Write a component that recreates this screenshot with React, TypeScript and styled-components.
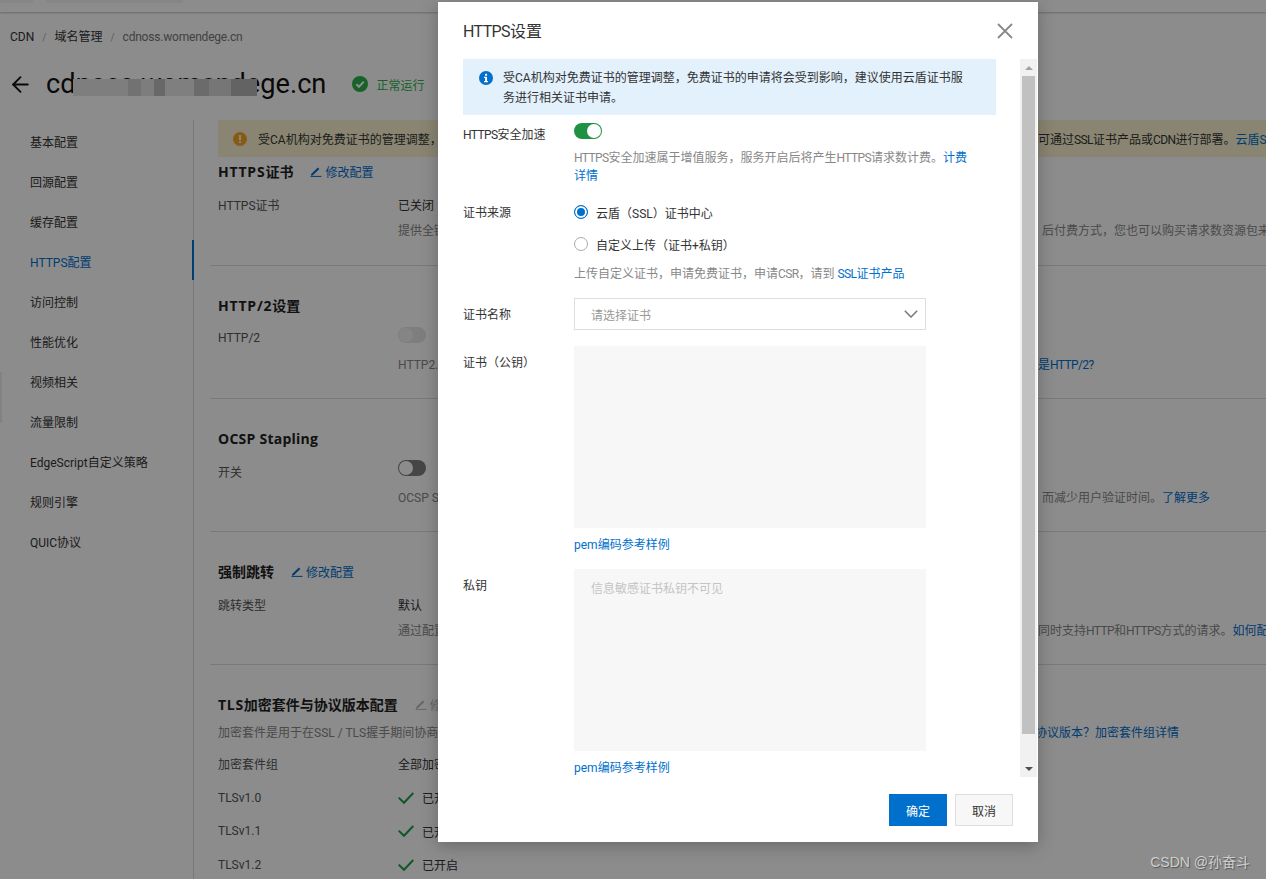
import React from "react";
import styled, { createGlobalStyle } from "styled-components";
import { ArrowLeft } from "lucide-react";

const GlobalStyle = createGlobalStyle`
  html, body {
    margin: 0;
    height: 100%;
    background: #fff;
  }
  body {
    font-family: Roboto, "Noto Sans CJK SC", "Liberation Sans", sans-serif;
    font-size: 12px;
    color: #333;
    overflow: hidden;
  }
  * {
    box-sizing: border-box;
  }
`;

const Page = styled.div`
  position: relative;
  width: 1266px;
  height: 879px;
  overflow: hidden;
  background: #fff;
`;

const TopBar = styled.div`
  display: flex;
  gap: 13px;
  height: 12px;
  background: #fff;
  box-shadow: 0 1px 2px rgba(0, 0, 0, 0.25);
`;

const TopTab = styled.span<{ $width: number }>`
  width: ${(p) => p.$width}px;
  height: 3px;
  background: #f4f4f4;
`;

const Breadcrumb = styled.nav`
  display: flex;
  align-items: center;
  gap: 8px;
  height: 48px;
  padding: 2px 0 0 10px;
`;

const Crumb = styled.span<{ $muted?: boolean }>`
  line-height: 20px;
  color: ${(p) => (p.$muted ? "#777" : "#333")};
  letter-spacing: ${(p) => (p.$muted ? "-0.2px" : 0)};
`;

const CrumbSlash = styled.span`
  color: #aaa;
  font-size: 10px;
`;

const TitleRow = styled.div`
  display: flex;
  align-items: center;
  height: 48px;
  margin-bottom: 12px;
  padding-left: 8px;
  color: #111;
`;

const PageTitle = styled.h1`
  position: relative;
  margin: 0 26px 0 13px;
  font-size: 27.2px;
  font-weight: 400;
  line-height: 48px;
  color: #111;
`;

const Mosaic = styled.span`
  position: absolute;
  left: 27px;
  top: 19px;
  width: 184px;
  height: 17px;
  filter: blur(0.6px);
  background: linear-gradient(
    90deg,
    #e6e6e6 0 30%,
    #cfcfcf 30% 37%,
    #e4e4e4 37% 44%,
    #bdbdbd 44% 50%,
    #e8e8e8 50% 66%,
    #c4c4c4 66% 74%,
    #d8d8d8 74% 86%,
    #b4b4b4 86% 100%
  );
`;

const Status = styled.span`
  display: flex;
  align-items: center;
  gap: 8px;
  color: #2bb24c;
`;

const Main = styled.div`
  display: flex;
  height: 759px;
`;

const Sidebar = styled.ul`
  flex: none;
  width: 194px;
  margin: 0;
  padding: 0;
  list-style: none;
  border-right: 1px solid #ddd;
`;

const NavItem = styled.li<{ $active?: boolean }>`
  height: 40px;
  padding: 3px 0 0 30px;
  margin-right: -1px;
  line-height: 40px;
  color: ${(p) => (p.$active ? "#0070cc" : "#333")};
  border-right: 2px solid ${(p) => (p.$active ? "#0070cc" : "transparent")};
`;

const Content = styled.div`
  flex: 1;
  min-width: 0;
  padding-left: 16px;
  overflow: hidden;
`;

const Notice = styled.div`
  display: flex;
  align-items: center;
  gap: 11px;
  height: 37px;
  margin-left: 8px;
  padding-left: 15px;
  white-space: nowrap;
  background: #fbf3cf;
  color: #333;
`;

const Section = styled.section<{ $first?: boolean }>`
  height: ${(p) => (p.$first ? 109 : 133)}px;
  padding: ${(p) => (p.$first ? 4 : 29)}px 0 0 8px;
  border-bottom: 1px solid #ddd;
  white-space: nowrap;
`;

const OpenSection = styled(Section)`
  height: auto;
  border-bottom: none;
`;

const SectionHead = styled.div`
  display: flex;
  align-items: center;
  gap: 17px;
  height: 20px;
  margin-bottom: 13px;
`;

const SectionTitle = styled.h3`
  margin: 0;
  font-family: "Open Sans", "Noto Sans CJK SC", sans-serif;
  font-size: 14px;
  font-weight: 700;
  color: #222;
`;

const TitleLatin = styled.span<{ $spread: number }>`
  letter-spacing: ${(p) => p.$spread}px;
`;

const EditLink = styled.a<{ $disabled?: boolean }>`
  display: flex;
  align-items: center;
  gap: 3px;
  color: ${(p) => (p.$disabled ? "#bbb" : "#0070cc")};
`;

const Row = styled.div`
  display: flex;
  align-items: center;
  height: 20px;
`;

const TlsRow = styled(Row)`
  height: 33.7px;
`;

const RowLabel = styled.span`
  width: 180px;
  flex: none;
  color: #555;
`;

const RowValue = styled.span`
  display: flex;
  align-items: center;
  gap: 8px;
  color: #333;
`;

const Description = styled.p<{ $indent?: boolean }>`
  display: flex;
  margin: 7px 0 0 ${(p) => (p.$indent ? 180 : 0)}px;
  line-height: 20px;
  color: #888;
`;

const TlsDescription = styled(Description)`
  margin: -4px 0 4px;
`;

/* the part of a long sentence that sits behind the dialog */
const Hidden = styled.span<{ $width: number }>`
  flex: none;
  width: ${(p) => p.$width}px;
  overflow: hidden;
`;

/* Latin runs are a little narrower in the reference than in Roboto */
const Latin = styled.span`
  letter-spacing: -0.6px;
`;

const Tail = styled.span`
  flex: none;
`;

const Link = styled.a`
  color: #0070cc;
`;

const PageSwitch = styled.span<{ $disabled?: boolean }>`
  position: relative;
  display: block;
  width: 28px;
  height: 16px;
  border-radius: 8px;
  margin-top: -6px;
  background: ${(p) => (p.$disabled ? "#e6e6e6" : "#808080")};
  &::after {
    content: "";
    position: absolute;
    left: 1px;
    top: 1px;
    width: 14px;
    height: 14px;
    border-radius: 50%;
    background: ${(p) => (p.$disabled ? "#f3f3f3" : "#fff")};
  }
`;

const SideHandle = styled.span`
  position: absolute;
  left: 0;
  top: 372px;
  width: 2px;
  height: 51px;
  background: #ededed;
`;

const Overlay = styled.div`
  position: absolute;
  inset: 0;
  background: rgba(0, 0, 0, 0.45);
`;

const Dialog = styled.div`
  position: absolute;
  left: 438px;
  top: 2px;
  display: flex;
  flex-direction: column;
  width: 600px;
  height: 840px;
  background: #fff;
  box-shadow: 0 4px 16px rgba(0, 0, 0, 0.25);
`;

const DialogHeader = styled.header`
  display: flex;
  align-items: center;
  justify-content: space-between;
  flex: none;
  height: 57px;
  padding: 0 25px 2px;
`;

const DialogTitle = styled.h2`
  margin: 0;
  font-size: 16px;
  font-weight: 400;
  color: #333;
`;

const CloseButton = styled.button`
  display: flex;
  margin-top: 3px;
  padding: 0;
  border: none;
  background: none;
  color: #888;
`;

const DialogBody = styled.div`
  display: flex;
  justify-content: space-between;
  flex: none;
  height: 718px;
  padding: 0 1px 0 25px;
  overflow: hidden;
`;

const FormArea = styled.div`
  width: 533px;
`;

const InfoBox = styled.div`
  display: flex;
  gap: 10px;
  margin-bottom: 8px;
  padding: 9px 24px 7px 16px;
  line-height: 20px;
  color: #333;
  background: #e3f1fd;
`;

const InfoIcon = styled.span`
  flex: none;
  display: flex;
  height: 20px;
  align-items: center;
`;

const FormRow = styled.div`
  display: grid;
  grid-template-columns: 111px 1fr;
  margin-bottom: 16px;
`;

/* fixed height: the control beside the label sets the height of the row */
const FormLabel = styled.label<{ $line: number }>`
  height: 20px;
  line-height: ${(p) => p.$line}px;
  color: #333;
`;

const FormSwitch = styled.span`
  position: relative;
  display: block;
  width: 28px;
  height: 16px;
  border-radius: 8px;
  background: #1f9242;
  &::after {
    content: "";
    position: absolute;
    right: 1px;
    top: 1px;
    width: 14px;
    height: 14px;
    border-radius: 50%;
    background: #fff;
  }
`;

const Help = styled.p<{ $gap: number }>`
  max-width: 400px;
  margin: ${(p) => p.$gap}px 0 -1px;
  line-height: 18px;
  color: #888;
`;

const RadioGroup = styled.div`
  display: flex;
  flex-direction: column;
  gap: 6px;
  margin-top: -1px;
`;

const RadioRow = styled.div`
  display: flex;
  align-items: center;
  gap: 8px;
  height: 26px;
  color: #333;
`;

const RadioDot = styled.span<{ $checked?: boolean }>`
  width: 14px;
  height: 14px;
  border-radius: 50%;
  border: ${(p) => (p.$checked ? "1px solid #0070cc" : "1px solid #aaa")};
  background: ${(p) => (p.$checked ? "#0070cc" : "#fff")};
  box-shadow: ${(p) => (p.$checked ? "inset 0 0 0 2px #fff" : "none")};
`;

const SelectBox = styled.div`
  display: flex;
  align-items: center;
  justify-content: space-between;
  width: 352px;
  height: 32px;
  padding: 0 7px 0 16px;
  border: 1px solid #dedede;
  color: #999;
`;

const PemArea = styled.textarea`
  display: block;
  width: 352px;
  height: 182px;
  padding: 11px 17px;
  border: none;
  outline: none;
  resize: none;
  background: #f7f7f7;
  font: inherit;
  line-height: 18px;
  &::placeholder {
    color: #c4c4c4;
    opacity: 1;
  }
`;

const PemLink = styled.a`
  display: block;
  margin: 8px 0 -1px;
  line-height: 18px;
  color: #0070cc;
`;

const ScrollTrack = styled.div`
  display: flex;
  flex-direction: column;
  flex: none;
  width: 17px;
  height: 100%;
  background: #f1f1f1;
`;

const ScrollArrow = styled.span<{ $down?: boolean }>`
  display: flex;
  align-items: center;
  justify-content: center;
  flex: none;
  height: 17px;
  margin-top: ${(p) => (p.$down ? "auto" : 0)};
  &::before {
    content: "";
    border-left: 4px solid transparent;
    border-right: 4px solid transparent;
    ${(p) =>
      p.$down
        ? "border-top: 4px solid #505050;"
        : "border-bottom: 4px solid #a3a3a3;"}
  }
`;

const ScrollThumb = styled.span`
  flex: none;
  height: 658px;
  margin: 0 2px;
  background: #c1c1c1;
`;

const DialogFooter = styled.footer`
  display: flex;
  justify-content: flex-end;
  gap: 8px;
  padding: 17px 25px 0 0;
`;

const Button = styled.button<{ $primary?: boolean }>`
  width: 58px;
  height: 32px;
  padding: 0;
  font: inherit;
  color: ${(p) => (p.$primary ? "#fff" : "#333")};
  background: ${(p) => (p.$primary ? "#0070cc" : "#f7f7f7")};
  border: ${(p) => (p.$primary ? "none" : "1px solid #dedede")};
`;

const Watermark = styled.span`
  position: absolute;
  right: 16px;
  bottom: 8px;
  font-family: "Liberation Sans", "Noto Sans CJK SC", sans-serif;
  font-size: 14px;
  color: #d0d0d0;
  text-shadow: 1px 1px 1px rgba(0, 0, 0, 0.4);
`;

const MarkSvg = styled.svg`
  flex: none;
  display: block;
`;

const navItems = [
  "基本配置",
  "回源配置",
  "缓存配置",
  "HTTPS配置",
  "访问控制",
  "性能优化",
  "视频相关",
  "流量限制",
  "EdgeScript自定义策略",
  "规则引擎",
  "QUIC协议",
];

const tlsVersions = ["TLSv1.0", "TLSv1.1", "TLSv1.2"];

function PenIcon() {
  return (
    <MarkSvg width="12" height="12" viewBox="0 0 12 12" fill="none">
      <path d="M1 9.2 7.8 2.4 9.4 4 2.6 10.4H1Z" fill="currentColor" />
      <path d="M0.5 11.4H11.5" stroke="currentColor" strokeWidth="1" />
    </MarkSvg>
  );
}

function CloseIcon() {
  return (
    <MarkSvg width="16" height="16" viewBox="0 0 16 16" fill="none">
      <path d="M1 1 15 15M15 1 1 15" stroke="currentColor" strokeWidth="1.8" />
    </MarkSvg>
  );
}

function CaretIcon() {
  return (
    <MarkSvg width="14" height="8" viewBox="0 0 14 8" fill="none">
      <path d="M0.8 0.8 7 7 13.2 0.8" stroke="#777" strokeWidth="1.5" />
    </MarkSvg>
  );
}

function TickIcon() {
  return (
    <MarkSvg width="16" height="12" viewBox="0 0 16 12" fill="none">
      <path d="M0.7 5.6 6 10.8 15.3 1" stroke="#1e9e47" strokeWidth="2" />
    </MarkSvg>
  );
}

function CircleMark({ size, color, mark }: { size: number; color: string; mark: "check" | "warn" | "info" }) {
  return (
    <MarkSvg width={size} height={size} viewBox="0 0 16 16">
      <circle cx="8" cy="8" r="8" fill={color} />
      {mark === "check" && (
        <path d="M4.3 8.2 7 10.8 11.8 5.6" fill="none" stroke="#fff" strokeWidth="2" />
      )}
      {mark === "warn" && (
        <>
          <rect x="7" y="3.4" width="2" height="6" fill="#fff" />
          <rect x="7" y="10.6" width="2" height="2" fill="#fff" />
        </>
      )}
      {mark === "info" && (
        <>
          <rect x="7" y="3.2" width="2.2" height="2.2" fill="#fff" />
          <path d="M5.8 6.6H9.2V11.4H10.2V12.8H5.8V11.4H7V8H5.8Z" fill="#fff" />
        </>
      )}
    </MarkSvg>
  );
}

export default function App() {
  return (
    <Page>
      <GlobalStyle />
      <TopBar>
        <TopTab $width={33} />
        <TopTab $width={137} />
      </TopBar>
      <Breadcrumb>
        <Crumb>CDN</Crumb>
        <CrumbSlash>/</CrumbSlash>
        <Crumb>域名管理</Crumb>
        <CrumbSlash>/</CrumbSlash>
        <Crumb $muted>cdnoss.womendege.cn</Crumb>
      </Breadcrumb>
      <TitleRow>
        <ArrowLeft size={25} strokeWidth={1.8} />
        <PageTitle>
          cdnoss.womendege.cn
          <Mosaic />
        </PageTitle>
        <Status>
          <CircleMark size={16} color="#2bb24c" mark="check" />
          正常运行
        </Status>
      </TitleRow>
      <Main>
        <Sidebar>
          {navItems.map((item) => (
            <NavItem key={item} $active={item === "HTTPS配置"}>
              {item}
            </NavItem>
          ))}
        </Sidebar>
        <Content>
          <Notice>
            <CircleMark size={14} color="#f5a623" mark="warn" />
            <Hidden $width={769}>
              受CA机构对免费证书的管理调整，免费证书的申请将会受到影响，建议使用云盾证书服务进行相关证书申请，
            </Hidden>
            <Tail>
              可通过<Latin>SSL</Latin>证书产品或<Latin>CDN</Latin>进行部署。<Link>云盾SSL证书</Link>
            </Tail>
          </Notice>
          <Section $first>
            <SectionHead>
              <SectionTitle>
                <TitleLatin $spread={0.8}>HTTPS</TitleLatin>证书
              </SectionTitle>
              <EditLink>
                <PenIcon />
                修改配置
              </EditLink>
            </SectionHead>
            <Row>
              <RowLabel>HTTPS证书</RowLabel>
              <RowValue>已关闭</RowValue>
            </Row>
            <Description $indent>
              <Hidden $width={644}>提供全链路HTTPS安全加速方案，HTTPS安全加速属于增值服务</Hidden>
              <Tail>后付费方式，您也可以购买请求数资源包来抵扣</Tail>
            </Description>
          </Section>
          <Section>
            <SectionHead>
              <SectionTitle>
                <TitleLatin $spread={0.8}>HTTP/2</TitleLatin>设置
              </SectionTitle>
            </SectionHead>
            <Row>
              <RowLabel>HTTP/2</RowLabel>
              <PageSwitch $disabled />
            </Row>
            <Description $indent>
              <Hidden $width={640}>HTTP2.0是最新的HTTP协议，开启前请先配置HTTPS证书</Hidden>
              <Link>
                是<Latin>HTTP/2?</Latin>
              </Link>
            </Description>
          </Section>
          <Section>
            <SectionHead>
              <SectionTitle>
                <TitleLatin $spread={0.25}>OCSP Stapling</TitleLatin>
              </SectionTitle>
            </SectionHead>
            <Row>
              <RowLabel>开关</RowLabel>
              <PageSwitch />
            </Row>
            <Description $indent>
              <Hidden $width={644}>OCSP Stapling功能开启后，由CDN节点查询证书状态信息</Hidden>
              <Tail>
                而减少用户验证时间。<Link>了解更多</Link>
              </Tail>
            </Description>
          </Section>
          <Section>
            <SectionHead>
              <SectionTitle>强制跳转</SectionTitle>
              <EditLink>
                <PenIcon />
                修改配置
              </EditLink>
            </SectionHead>
            <Row>
              <RowLabel>跳转类型</RowLabel>
              <RowValue>默认</RowValue>
            </Row>
            <Description $indent>
              <Hidden $width={640}>通过配置强制跳转，可以将客户端到边缘节点的原请求方式强制跳转</Hidden>
              <Tail>
                同时支持<Latin>HTTP</Latin>和<Latin>HTTPS</Latin>方式的请求。<Link>如何配置</Link>
              </Tail>
            </Description>
          </Section>
          <OpenSection>
            <SectionHead>
              <SectionTitle>
                <TitleLatin $spread={0.7}>TLS</TitleLatin>加密套件与协议版本配置
              </SectionTitle>
              <EditLink $disabled>
                <PenIcon />
                修改配置
              </EditLink>
            </SectionHead>
            <TlsDescription>
              <Hidden $width={817}>加密套件是用于在SSL / TLS握手期间协商安全设置的算法的组合</Hidden>
              <Link>协议版本？加密套件组详情</Link>
            </TlsDescription>
            <TlsRow>
              <RowLabel>加密套件组</RowLabel>
              <RowValue>全部加密套件</RowValue>
            </TlsRow>
            {tlsVersions.map((version) => (
              <TlsRow key={version}>
                <RowLabel>{version}</RowLabel>
                <RowValue>
                  <TickIcon />
                  已开启
                </RowValue>
              </TlsRow>
            ))}
          </OpenSection>
        </Content>
      </Main>
      <SideHandle />
      <Overlay />
      <Dialog>
        <DialogHeader>
          <DialogTitle>
            <Latin>HTTPS</Latin>设置
          </DialogTitle>
          <CloseButton>
            <CloseIcon />
          </CloseButton>
        </DialogHeader>
        <DialogBody>
          <FormArea>
            <InfoBox>
              <InfoIcon>
                <CircleMark size={14} color="#0070cc" mark="info" />
              </InfoIcon>
              <span>
                受CA机构对免费证书的管理调整，免费证书的申请将会受到影响，建议使用云盾证书服务进行相关证书申请。
              </span>
            </InfoBox>
            <FormRow>
              <FormLabel $line={24}>
                <Latin>HTTPS</Latin>安全加速
              </FormLabel>
              <div>
                <FormSwitch />
                <Help $gap={10}>
                  <Latin>HTTPS</Latin>安全加速属于增值服务，服务开启后将产生<Latin>HTTPS</Latin>请求数计费。<Link>计费详情</Link>
                </Help>
              </div>
            </FormRow>
            <FormRow>
              <FormLabel $line={26}>证书来源</FormLabel>
              <div>
                <RadioGroup>
                  <RadioRow>
                    <RadioDot $checked />
                    云盾（SSL）证书中心
                  </RadioRow>
                  <RadioRow>
                    <RadioDot />
                    自定义上传（证书+私钥）
                  </RadioRow>
                </RadioGroup>
                <Help $gap={8}>
                  上传自定义证书，申请免费证书，申请<Latin>CSR</Latin>，请到 <Link><Latin>SSL</Latin>证书产品</Link>
                </Help>
              </div>
            </FormRow>
            <FormRow>
              <FormLabel $line={34}>证书名称</FormLabel>
              <SelectBox>
                请选择证书
                <CaretIcon />
              </SelectBox>
            </FormRow>
            <FormRow>
              <FormLabel $line={35}>证书（公钥）</FormLabel>
              <div>
                <PemArea readOnly />
                <PemLink>pem编码参考样例</PemLink>
              </div>
            </FormRow>
            <FormRow>
              <FormLabel $line={35}>私钥</FormLabel>
              <div>
                <PemArea readOnly placeholder="信息敏感证书私钥不可见" />
                <PemLink>pem编码参考样例</PemLink>
              </div>
            </FormRow>
          </FormArea>
          <ScrollTrack>
            <ScrollArrow />
            <ScrollThumb />
            <ScrollArrow $down />
          </ScrollTrack>
        </DialogBody>
        <DialogFooter>
          <Button $primary>确定</Button>
          <Button>取消</Button>
        </DialogFooter>
      </Dialog>
      <Watermark>CSDN @孙奋斗</Watermark>
    </Page>
  );
}
